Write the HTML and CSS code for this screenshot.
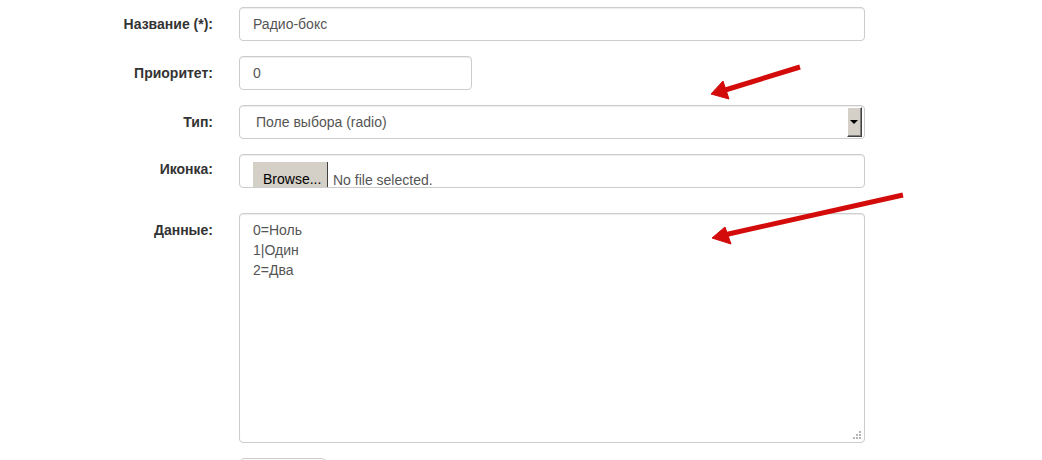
FILE: index.html
```html
<!DOCTYPE html>
<html lang="ru">
<head>
<meta charset="utf-8">
<link rel="stylesheet" href="styles.css">
</head>
<body>
<form class="form">
  <div class="row">
    <label class="label">Название (*):</label>
    <div class="field"><input class="control" type="text" value="Радио-бокс"></div>
  </div>
  <div class="row">
    <label class="label">Приоритет:</label>
    <div class="field"><input class="control short" type="text" value="0"></div>
  </div>
  <div class="row">
    <label class="label">Тип:</label>
    <div class="field">
      <div class="control select">
        <span class="select-text">Поле выбора (radio)</span>
        <span class="select-btn"><span class="tri"></span></span>
      </div>
    </div>
  </div>
  <div class="row row-file">
    <label class="label label-file">Иконка:</label>
    <div class="field">
      <div class="control file">
        <span class="browse">Browse...</span>
        <span class="file-text">No file selected.</span>
      </div>
    </div>
  </div>
  <div class="row">
    <label class="label">Данные:</label>
    <div class="field area-wrap">
      <textarea class="control area">0=Ноль
1|Один
2=Два</textarea>
      <svg class="grip" width="9" height="9" viewBox="0 0 9 9">
        <g fill="#b5b5b5">
          <rect x="7" y="1" width="2" height="2"/>
          <rect x="4" y="4" width="2" height="2"/>
          <rect x="7" y="4" width="2" height="2"/>
          <rect x="1" y="7" width="2" height="2"/>
          <rect x="4" y="7" width="2" height="2"/>
          <rect x="7" y="7" width="2" height="2"/>
        </g>
      </svg>
    </div>
  </div>
  <div class="row">
    <div class="label"></div>
    <div class="field"><button type="button" class="btn"></button></div>
  </div>
</form>
<svg class="arrows" width="1042" height="460" viewBox="0 0 1042 460">
  <g fill="#d40b0b" stroke="#d40b0b">
    <line x1="800" y1="67" x2="722" y2="91" stroke-width="5"/>
    <polygon points="711,94 723,81 729,99" stroke-width="1" stroke-linejoin="round"/>
    <line x1="903" y1="195" x2="724" y2="235" stroke-width="5"/>
    <polygon points="712,238 725,227 731,244" stroke-width="1" stroke-linejoin="round"/>
  </g>
</svg>
</body>
</html>
```
FILE: styles.css
```css
html, body {
  margin: 0;
  padding: 0;
  overflow: hidden;
  background: #fff;
}
body {
  position: relative;
  width: 1042px;
  height: 460px;
  font-family: "Liberation Sans", Arial, sans-serif;
  font-size: 14px;
  color: #333;
}
.form {
  display: flex;
  flex-direction: column;
  gap: 15px;
  padding-top: 7px;
}
.row {
  display: grid;
  grid-template-columns: 213px 626px;
  column-gap: 26px;
}
.row-file {
  margin-bottom: 10px;
}
.label {
  text-align: right;
  font-weight: bold;
  padding-top: 7px;
  line-height: 20px;
  color: #333;
}
.label-file {
  padding-top: 5px;
}
.control {
  display: block;
  box-sizing: border-box;
  width: 626px;
  height: 34px;
  padding: 6px 13px;
  border: 1px solid #ccc;
  border-radius: 4px;
  font-family: "Liberation Sans", Arial, sans-serif;
  font-size: 14px;
  line-height: 20px;
  color: #555;
  background: #fff;
  box-shadow: inset 0 1px 1px rgba(0,0,0,0.075);
  outline: none;
  margin: 0;
}
.short {
  width: 233px;
}
.select {
  display: flex;
  align-items: center;
  padding: 0 2px 0 16px;
  justify-content: space-between;
}
.select-text {
  line-height: 20px;
}
.select-btn {
  box-sizing: border-box;
  width: 15px;
  height: 30px;
  background: #d4d0c8;
  border-top: 1px solid #fff;
  border-left: 1px solid #fff;
  border-right: 1px solid #404040;
  border-bottom: 1px solid #404040;
  box-shadow: inset -1px -1px 0 #808080;
  display: flex;
  align-items: center;
  justify-content: center;
}
.tri {
  width: 0;
  height: 0;
  border-left: 4px solid transparent;
  border-right: 4px solid transparent;
  border-top: 4px solid #000;
  margin-right: 1px;
}
.file {
  display: flex;
  align-items: flex-start;
  padding: 7px 13px 0;
  overflow: hidden;
}
.browse {
  box-sizing: border-box;
  width: 75px;
  height: 32px;
  background: #d4d0c8;
  color: #000;
  border-right: 1px solid #404040;
  padding: 9px 0 0 10px;
  line-height: 16px;
  flex: none;
}
.file-text {
  padding: 10px 0 0 5px;
  line-height: 16px;
  color: #555;
}
.area-wrap {
  position: relative;
}
.area {
  height: 230px;
  resize: none;
  padding: 6px 13px;
  overflow: hidden;
}
.grip {
  position: absolute;
  right: 4px;
  bottom: 4px;
}
.btn {
  box-sizing: border-box;
  width: 86px;
  height: 34px;
  border: 1px solid #ccc;
  border-radius: 4px;
  background: #fff;
  margin-left: 1px;
  font-family: "Liberation Sans", Arial, sans-serif;
  font-size: 14px;
  color: #333;
  display: block;
}
.arrows {
  position: absolute;
  left: 0;
  top: 0;
  pointer-events: none;
}
```
